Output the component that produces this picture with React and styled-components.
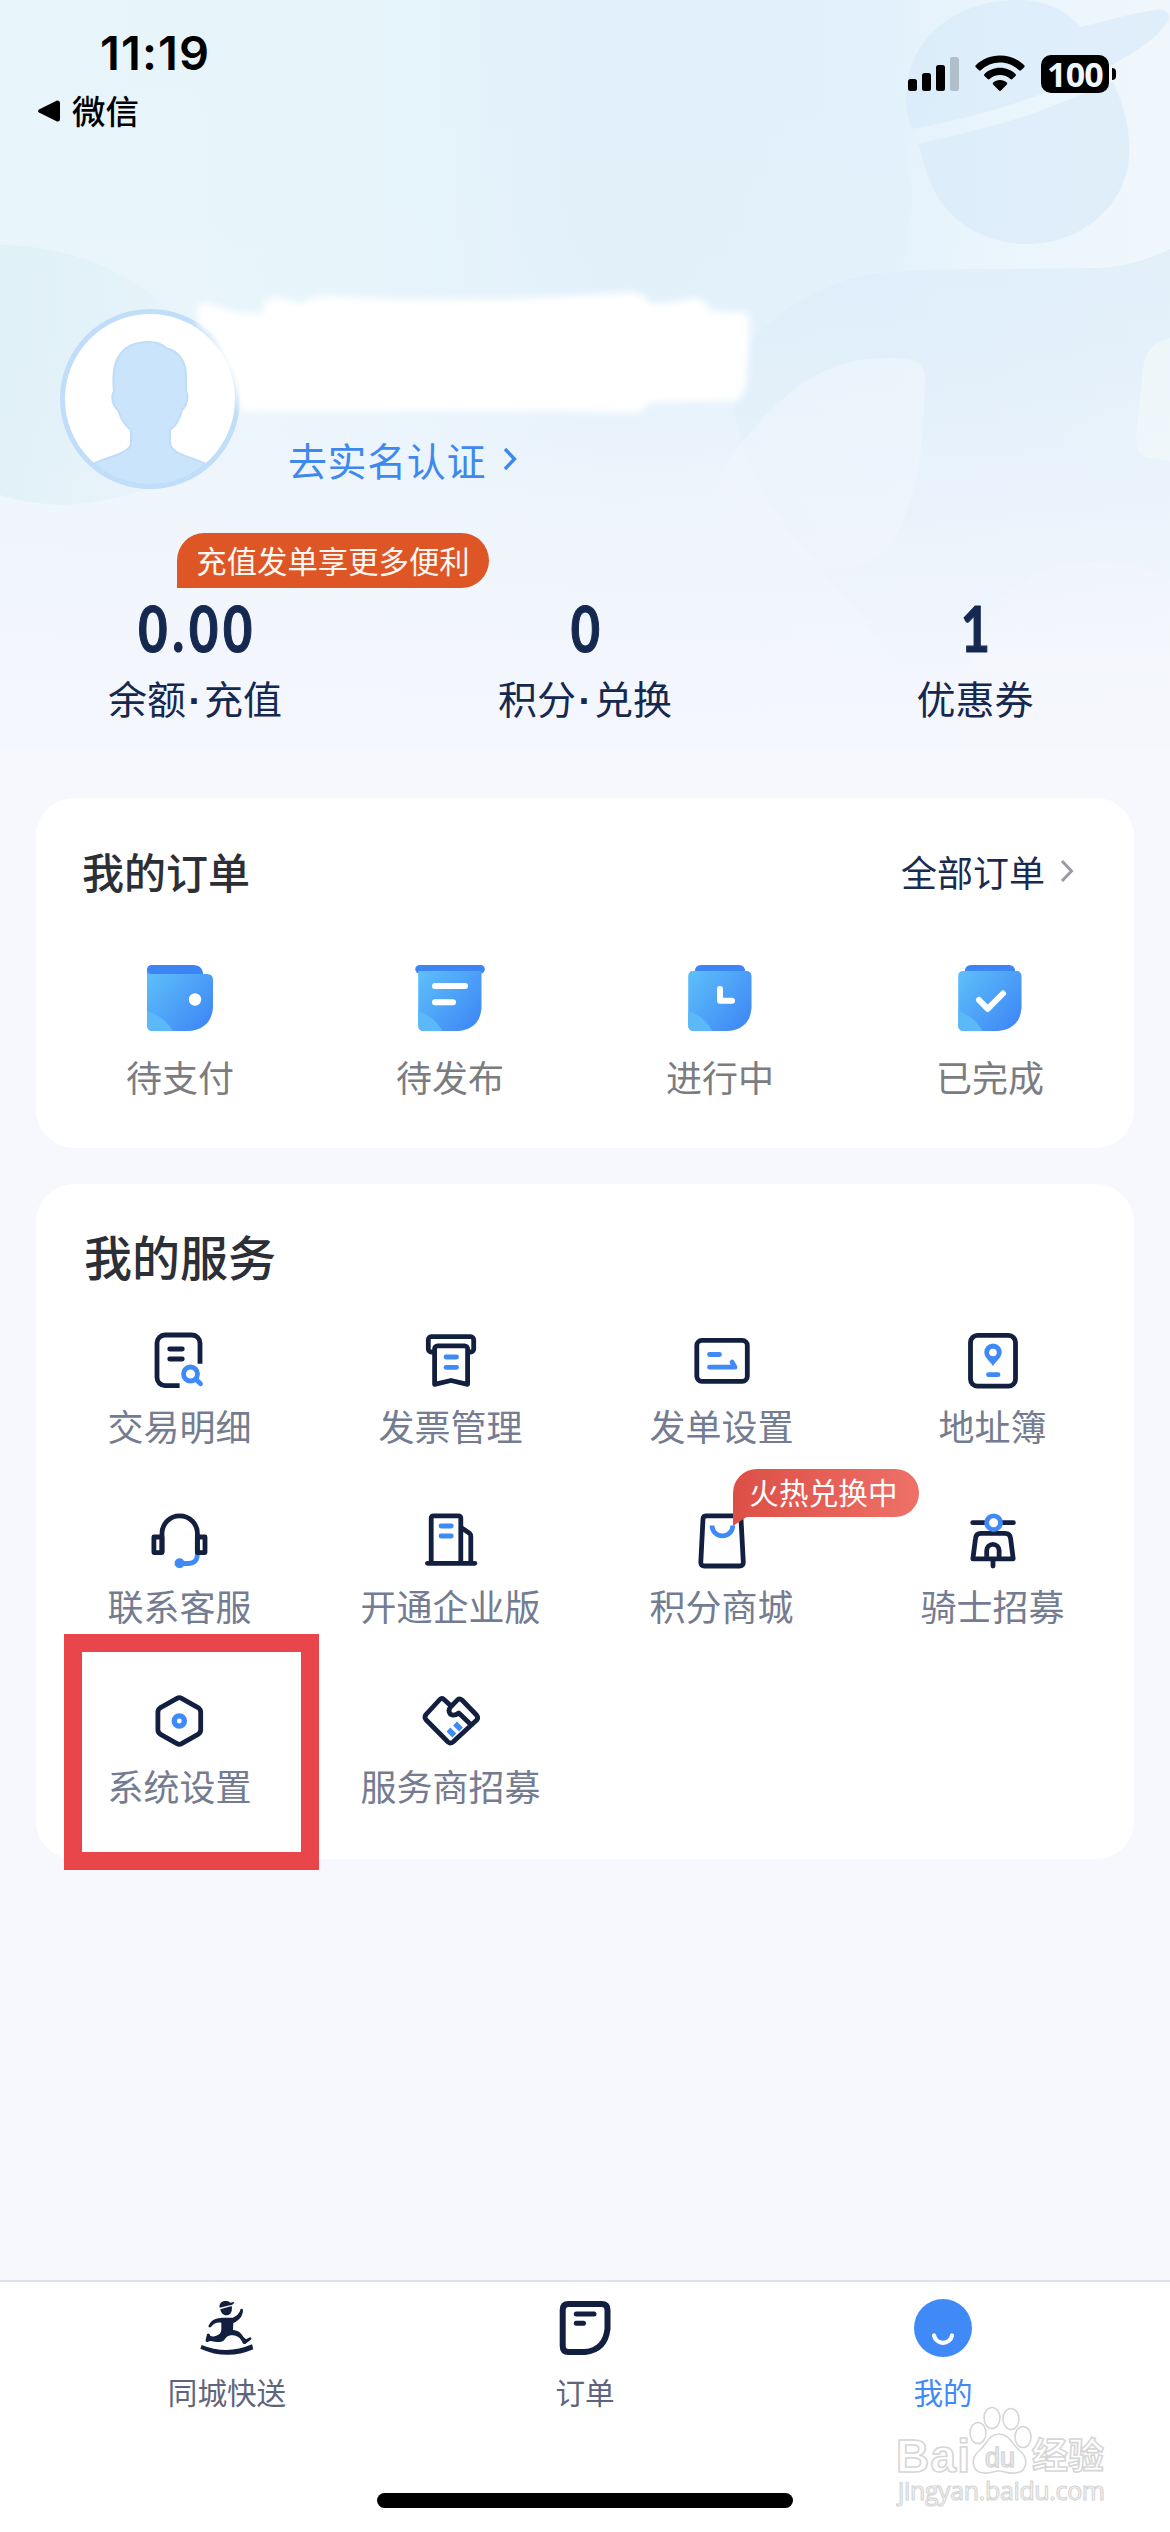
import React from 'react';
import styled, { createGlobalStyle, css } from 'styled-components';

const NAVY = '#121f3f';
const BLUE = '#3f8af6';

const GlobalStyle = createGlobalStyle`
  * {
    box-sizing: border-box;
  }
  body {
    margin: 0;
    background-color: #f7f8fd;
    font-family: 'Noto Sans CJK SC', 'Noto Sans', sans-serif;
  }
  svg {
    display: block;
    flex: none;
  }
`;

const Page = styled.div`
  display: flex;
  flex-direction: column;
  position: relative;
  width: 1170px;
  height: 2532px;
  overflow: hidden;
  background-color: #f7f8fd;
`;

const Header = styled.header`
  position: relative;
  height: 750px;
  margin-bottom: 48px;
  background: linear-gradient(
      180deg,
      rgba(246, 248, 253, 0) 0%,
      rgba(243, 246, 253, 0.1) 45%,
      rgba(243, 246, 253, 0.8) 72%,
      #f5f7fd 100%
    ),
    linear-gradient(90deg, #e8f5fa 0%, #e6f4fa 32%, #e1f0fa 52%, #e2f1fb 75%, #ebf5fb 100%);
`;

const Backdrop = styled.svg`
  position: absolute;
  top: 0;
  left: 0;
`;

const Smudge = styled.svg`
  position: absolute;
  top: 270px;
  left: 170px;
`;

const StatusBar = styled.div`
  position: relative;
  display: flex;
  justify-content: space-between;
  height: 309px;
  padding: 24px 54px 0 38px;
`;

const Clock = styled.div`
  height: 60px;
  padding-left: 62px;
  font-family: Inter, sans-serif;
  font-size: 47px;
  font-weight: 600;
  line-height: 57px;
  letter-spacing: 1.1px;
  color: #000;
`;

const BackLink = styled.div`
  display: flex;
  align-items: center;
  gap: 11px;
  height: 54px;
  font-size: 33.5px;
  font-weight: 500;
  line-height: 50px;
  color: #000;
`;

const BackLabel = styled.span`
  padding-bottom: 2px;
`;

const StatusIcons = styled.div`
  display: flex;
  align-items: flex-start;
  padding-top: 31px;
`;

const Battery = styled.div`
  display: flex;
  align-items: center;
  justify-content: center;
  width: 68px;
  height: 38px;
  margin-left: 16px;
  border-radius: 10px;
  background-color: #000;
  font-family: 'Open Sans', sans-serif;
  font-size: 34px;
  font-weight: 700;
  line-height: 38px;
  letter-spacing: -0.8px;
  color: #f0f7fc;
`;

const BatteryCap = styled.div`
  width: 4px;
  height: 12px;
  margin: 13px 0 0 3px;
  border-radius: 0 4px 4px 0;
  background-color: #000;
`;

const Profile = styled.div`
  position: relative;
  display: flex;
  align-items: flex-end;
  gap: 48px;
  height: 180px;
  padding-left: 60px;
`;

const VerifyLink = styled.a`
  display: flex;
  align-items: center;
  gap: 17px;
  height: 60px;
  padding-bottom: 1px;
  font-size: 39px;
  line-height: 56px;
  letter-spacing: 0.6px;
  color: #3f88ee;
`;

const Stats = styled.div`
  position: relative;
  display: grid;
  grid-template-columns: repeat(3, 1fr);
  padding-top: 105px;
`;

const Stat = styled.div`
  position: relative;
  display: flex;
  flex-direction: column;
  align-items: center;
  color: #15284f;
`;

const StatValue = styled.div`
  height: 68px;
  font-family: Lato, sans-serif;
  font-size: 63px;
  font-weight: 700;
  line-height: 68px;
  letter-spacing: 6px;
  text-indent: 6px;
  transform: scaleX(0.8);
  -webkit-text-stroke: 1.2px #15284f;
`;

const StatLabel = styled.div`
  height: 60px;
  margin-top: 5px;
  font-size: 39px;
  line-height: 60px;
`;

const Dot = styled.span`
  display: inline-block;
  width: 18px;
  text-align: center;
  font-family: 'Liberation Sans', sans-serif;
  font-weight: 700;
`;

const RechargeBadge = styled.div`
  position: absolute;
  top: -61px;
  left: 177px;
  width: 312px;
  height: 55px;
  border-radius: 28px 28px 28px 0;
  background-color: #de5626;
  font-size: 30.4px;
  line-height: 54px;
  text-align: center;
  white-space: nowrap;
  color: #fff8f2;
`;

const Card = styled.section`
  position: relative;
  margin: 0 36px 36px;
  height: ${({ $height }) => $height}px;
  border-radius: 38px;
  background-color: #fff;
`;

const CardHead = styled.div`
  display: flex;
  align-items: center;
  justify-content: space-between;
  height: ${({ $height }) => $height}px;
  padding: ${({ $padding }) => $padding};
`;

const CardTitle = styled.h2`
  margin: 0;
  font-size: ${({ $size }) => $size}px;
  font-weight: 500;
  line-height: 60px;
  color: #2d2f36;
`;

const AllOrders = styled.a`
  display: flex;
  align-items: center;
  gap: 15px;
  font-size: 36px;
  line-height: 52px;
  color: #1a2b50;
`;

const IconGrid = styled.div`
  display: grid;
  grid-template-columns: repeat(4, 1fr);
  grid-auto-rows: 180px;
  padding: ${({ $padding }) => $padding};
`;

const IconCell = styled.div`
  position: relative;
  display: flex;
  flex-direction: column;
  align-items: center;
  gap: ${({ $gap }) => $gap}px;
  font-size: 36px;
  line-height: 52px;
  white-space: nowrap;
  color: ${({ $color }) => $color};
`;

const HotBadge = styled.div`
  position: absolute;
  top: -41px;
  left: 147px;
  width: 186px;
  height: 48px;
  padding-right: 5px;
  border-radius: 24px 24px 24px 0;
  background: linear-gradient(90deg, #dc4f46, #ee7168);
  font-size: 29.5px;
  line-height: 45px;
  letter-spacing: 0.2px;
  text-align: center;
  color: #fff;

  &::after {
    content: '';
    position: absolute;
    top: 47px;
    left: 0;
    border-top: 10px solid #dc4f46;
    border-right: 15px solid transparent;
  }
`;

const Highlight = styled.div`
  position: absolute;
  top: 450px;
  left: 28px;
  width: 255px;
  height: 236px;
  border: 18px solid #e8464b;
`;

const TabBar = styled.nav`
  display: grid;
  grid-template-columns: repeat(3, 358px);
  justify-content: center;
  position: relative;
  height: 252px;
  margin-top: auto;
  padding-top: 17px;
  border-top: 2px solid #dde1ea;
  background-color: #fff;
`;

const Tab = styled.div`
  display: flex;
  flex-direction: column;
  align-items: center;
  gap: 13px;
  font-size: 29.6px;
  line-height: 44px;
  color: #5d657d;
  ${({ $active }) =>
    $active &&
    css`
      color: ${BLUE};
    `}
`;

const HomeIndicator = styled.div`
  position: absolute;
  bottom: 24px;
  left: 377px;
  width: 416px;
  height: 15px;
  border-radius: 8px;
  background-color: #000;
`;

const Watermark = styled.svg`
  position: absolute;
  top: 116px;
  left: 891px;
`;

/* ---------- header drawings ---------- */

const HeaderBackdrop = () => (
  <Backdrop width="1170" height="750" viewBox="0 0 1170 750">
    <defs>
      <linearGradient id="fade" x1="0" y1="0" x2="0" y2="1">
        <stop offset="0" stopColor="#dcecf9" stopOpacity="0.6" />
        <stop offset="0.6" stopColor="#e2effa" stopOpacity="0.4" />
        <stop offset="1" stopColor="#e6f0fb" stopOpacity="0" />
      </linearGradient>
      <linearGradient id="glow" x1="0" y1="0" x2="1" y2="0">
        <stop offset="0" stopColor="#f2f8fd" stopOpacity="0" />
        <stop offset="1" stopColor="#f0f7fd" stopOpacity="0.9" />
      </linearGradient>
      <linearGradient id="leaf" x1="0" y1="1" x2="1" y2="0">
        <stop offset="0" stopColor="#f5f7fd" stopOpacity="0" />
        <stop offset="0.4" stopColor="#f5f7fd" stopOpacity="0.4" />
        <stop offset="1" stopColor="#f1f6fd" stopOpacity="0.6" />
      </linearGradient>
      <linearGradient id="shade" x1="0" y1="0" x2="1" y2="0">
        <stop offset="0" stopColor="#dceff6" stopOpacity="0.7" />
        <stop offset="1" stopColor="#dceff6" stopOpacity="0" />
      </linearGradient>
    </defs>
    <path d="M0 245C90 245 180 290 240 400C230 450 170 500 60 505C30 503 15 500 0 495Z" fill="url(#shade)" />
    <path d="M880 0H1170V249C1145 262 1120 268 1094 268L900 273C930 180 890 90 880 0Z" fill="url(#glow)" />
    <path
      d="M740 352C765 325 785 308 815 293C845 278 870 273 895 272C930 269 965 269 1002 269L1094 268C1120 268 1148 260 1170 249V680H900C880 600 700 500 740 352Z"
      fill="url(#fade)"
    />
    <path
      d="M746 437C790 385 830 358 885 358C915 358 925 360 925 378C924 430 920 490 903 520C880 580 840 570 800 560C720 540 690 500 746 437Z"
      fill="url(#leaf)"
    />
    <path d="M1170 338C1152 343 1145 352 1143 370L1136 436C1135 450 1140 457 1150 458L1170 461Z" fill="#f3f9fb" opacity="0.65" />
    <path d="M960 700C975 610 1020 562 1095 562C1125 562 1150 568 1170 578V750H960Z" fill="#f8fafd" opacity="0.3" />
    <path
      d="M911.7 129C905 112 904 92 910 70C922 28 965 0 1018 0C1042 0 1064 8 1081 27C1110 20 1135 12 1161 9.500C1168 11 1171 16 1168 22C1155 40 1135 52 1113 64C1090 77 1070 83 1048 92C1000 109 960 120 911.700 129Z"
      fill="#d7e9f9"
      opacity="0.65"
    />
    <path
      d="M918.6 144C960 135 1000 124 1029 115C1060 104 1090 90 1113 82C1122 100 1129.500 126 1129.500 150C1129 205 1082 244 1028 244C985 244 950 222 934 190C927 176 923 160 918.600 144Z"
      fill="#d8e9f9"
      opacity="0.65"
    />
  </Backdrop>
);

const NameSmudge = () => (
  <Smudge width="620" height="170" viewBox="170 270 620 170">
    <filter id="soft" x="-5%" y="-15%" width="110%" height="130%">
      <feGaussianBlur stdDeviation="3.5" />
    </filter>
    <path
      d="M198 325L197 305Q206 300 215 305Q235 314 262 314L264 302Q272 295 284 299L302 303Q314 297 325 296Q460 305 632 292Q644 293 650 304Q672 303 697 298Q706 302 712 311L742 312Q750 314 750 322L747 378Q745 397 735 401L648 403L640 413L560 411H240Q236 390 232 380L212 338Z"
      fill="#fff"
      filter="url(#soft)"
    />
  </Smudge>
);

const Avatar = () => (
  <svg width="180" height="180" viewBox="0 0 180 180">
    <defs>
      <clipPath id="avatarClip">
        <circle cx="90" cy="90" r="87.5" />
      </clipPath>
    </defs>
    <circle cx="90" cy="90" r="87.500" fill="#fff" />
    <path
      clipPath="url(#avatarClip)"
      d="M89 33C96 33 102 35 106 39C119 42 126 53 126 66V82C129 86 127 97 122 101C120 109 116 117 110 121V134C111 147 138 148 150 158V180H28V158C42 148 70 146 71 134V121C65 117 61 110 58 101C52 96 51 87 54 82C51 55 58 33 89 33Z"
      fill="#c9e4fb"
      stroke="#c0dcf8"
      strokeWidth="2"
    />
    <circle cx="90" cy="90" r="87.500" fill="none" stroke="#c0ddfa" strokeWidth="5" />
  </svg>
);

const SignalIcon = () => (
  <svg width="52" height="36" viewBox="0 0 52 36">
    <rect x="0" y="24" width="9" height="12" rx="2.500" />
    <rect x="14" y="18" width="9" height="18" rx="2.500" />
    <rect x="28" y="10" width="9" height="26" rx="2.500" />
    <rect x="42" y="2" width="9" height="34" rx="2.500" fill="#b1bfca" />
  </svg>
);

const WifiSvg = styled.svg`
  margin-left: 15px;
`;

const WifiIcon = () => (
  <WifiSvg width="50" height="37" viewBox="0 0 50 37">
    <path d="M25 0.500C34.500 0.500 43 4.200 49.200 10.200C49.800 10.800 49.800 11.600 49.200 12.200L46 15.300C45.400 15.900 44.700 15.900 44.100 15.300C39 10.500 32.400 7.600 25 7.600S11 10.500 5.900 15.300C5.300 15.900 4.600 15.900 4 15.300L0.800 12.200C0.200 11.600 0.200 10.800 0.800 10.200C7 4.200 15.500 0.500 25 0.500Z" />
    <path d="M25 12.800C31 12.800 36.400 15.100 40.500 18.900C41.100 19.500 41.100 20.300 40.500 20.900L37.300 24C36.700 24.600 36 24.600 35.400 24C32.600 21.500 29 20 25 20S17.400 21.500 14.600 24C14 24.600 13.300 24.600 12.700 24L9.500 20.900C8.900 20.300 8.900 19.500 9.500 18.900C13.600 15.100 19 12.800 25 12.800Z" />
    <path d="M25 25C27.700 25 30.100 26 31.800 27.600C32.400 28.200 32.400 29 31.800 29.600L26 35.600C25.400 36.200 24.600 36.200 24 35.600L18.200 29.600C17.600 29 17.600 28.200 18.200 27.600C19.900 26 22.300 25 25 25Z" />
  </WifiSvg>
);

const Chevron = ({ color, width }) => (
  <svg width="14" height="24" viewBox="0 0 14 24" fill="none" stroke={color} strokeWidth={width}>
    <path d="M2 2L11.500 12L2 22" />
  </svg>
);

/* ---------- order icons ---------- */

const OrderSvg = ({ children }) => (
  <svg width="72" height="72" viewBox="0 0 72 72">
    <defs>
      <linearGradient id="sheet" x1="0" y1="0.1" x2="1" y2="0.9">
        <stop offset="0" stopColor="#5dbdf9" />
        <stop offset="1" stopColor="#3d86f6" />
      </linearGradient>
    </defs>
    {children}
  </svg>
);

const Sheet = () => (
  <>
    <path d="M9 9H62.500Q67.500 9 67.500 14.500V46Q66 67 44 69H10Q4.200 69 4.200 63V14.500Q4.200 9 9 9Z" fill="url(#sheet)" />
    <path d="M4.200 49Q20 54 28.500 69H10Q4.200 69 4.200 63Z" fill="#5bb9f8" />
  </>
);

const WalletIcon = () => (
  <OrderSvg>
    <path d="M8 3H49Q59 3 59.300 14H3V8Q3 3 8 3Z" fill="#3c85f3" />
    <path d="M3 10Q4 12 7 12H63Q69 12 69 18V46Q67 67 45 69H9Q3 69 3 63Z" fill="url(#sheet)" />
    <path d="M3 49Q20 54 29 69H9Q3 69 3 63Z" fill="#5bb9f8" />
    <circle cx="51" cy="37.500" r="6.200" fill="#fff" />
  </OrderSvg>
);

const DraftIcon = () => (
  <OrderSvg>
    <rect x="1.300" y="3" width="69.500" height="8.500" rx="4.200" fill="#3c85f3" />
    <path d="M4.200 9H67.500V46Q66 67 44 69H10Q4.200 69 4.200 63Z" fill="url(#sheet)" />
    <path d="M4.200 49Q20 54 28.500 69H10Q4.200 69 4.200 63Z" fill="#5bb9f8" />
    <path d="M21 24H51M21 40.300H39" stroke="#fff" strokeWidth="6" strokeLinecap="round" />
  </OrderSvg>
);

const ProgressIcon = () => (
  <OrderSvg>
    <path d="M10.700 10Q11 3 17 3H55Q61 3 61.300 10Z" fill="#3c85f3" />
    <Sheet />
    <path d="M36 27V38.700H48" fill="none" stroke="#fff" strokeWidth="6" strokeLinecap="round" strokeLinejoin="round" />
  </OrderSvg>
);

const DoneIcon = () => (
  <OrderSvg>
    <path d="M10.700 10Q11 3 17 3H55Q61 3 61.300 10Z" fill="#3c85f3" />
    <Sheet />
    <path d="M25 38L33.700 46.800L49 31.500" fill="none" stroke="#fff" strokeWidth="6" strokeLinecap="round" strokeLinejoin="round" />
  </OrderSvg>
);

/* ---------- service icons ---------- */

const ServiceSvg = ({ children }) => (
  <svg width="60" height="60" viewBox="0 0 60 60" fill="none" stroke={NAVY} strokeWidth="4.800" strokeLinejoin="round">
    {children}
  </svg>
);

const DetailIcon = () => (
  <ServiceSvg>
    <path d="M50 33.700V13a8 8 0 0 0-8-8H15a8 8 0 0 0-8 8v34.600a8 8 0 0 0 8 8h14.600" />
    <path d="M19.700 19H32.300M19.700 29H32.300" strokeLinecap="round" />
    <circle cx="40.500" cy="44" r="7" stroke={BLUE} />
    <path d="M46 49.500L50.500 53.800" stroke={BLUE} strokeLinecap="round" />
  </ServiceSvg>
);

const InvoiceIcon = () => (
  <ServiceSvg>
    <path d="M13 22H10.300a3 3 0 0 1-3-3V9.700a3 3 0 0 1 3-3h39.400a3 3 0 0 1 3 3V19a3 3 0 0 1-3 3H47" />
    <path d="M13.600 54.300V18.800a3 3 0 0 1 3-3h27a3 3 0 0 1 3 3V54.300L30 50.500Z" />
    <path d="M25 27H35.600M25 37.300H35.600" stroke={BLUE} strokeLinecap="round" />
  </ServiceSvg>
);

const OrderSettingIcon = () => (
  <ServiceSvg>
    <rect x="4.800" y="10.400" width="50.500" height="40.900" rx="5" />
    <path d="M17.500 24.500H27.500M17.500 37.200H43L40 32" stroke={BLUE} strokeLinecap="round" />
  </ServiceSvg>
);

const AddressIcon = () => (
  <ServiceSvg>
    <rect x="7.500" y="5.400" width="45" height="50.800" rx="7" />
    <path
      d="M30 13.500a8.700 8.700 0 0 1 8.700 8.800C38.700 28 33 31 30 36C27 31 21.300 28 21.300 22.300A8.700 8.700 0 0 1 30 13.500Z"
      fill={BLUE}
      stroke="none"
    />
    <circle cx="30" cy="22.500" r="3.800" fill="#fff" stroke="none" />
    <path d="M25.500 44.700H35" stroke={BLUE} strokeLinecap="round" />
  </ServiceSvg>
);

const SupportIcon = () => (
  <ServiceSvg>
    <path d="M47.300 43V45Q47 53.500 37.500 53.500H30" stroke={BLUE} />
    <circle cx="29.600" cy="53.300" r="5" fill={BLUE} stroke="none" />
    <path d="M12 42.600V23.500a17.700 17.700 0 0 1 35.400 0V42.600" />
    <path d="M12 27H3.900V42.600H12ZM47.300 27H55V42.600H47.300Z" />
  </ServiceSvg>
);

const CompanyIcon = () => (
  <ServiceSvg>
    <path d="M10.200 53V8a2.200 2.200 0 0 1 2.200-2.200h25.200a2.200 2.200 0 0 1 2.200 2.200V53" />
    <path d="M40 17.500L48.500 23.300Q49.800 24.500 49.800 26.500V53" />
    <path d="M6.500 53.300H53.800" strokeLinecap="round" />
    <path d="M20 16H30.300M20 26H30.300" stroke={BLUE} strokeLinecap="round" />
  </ServiceSvg>
);

const MallIcon = () => (
  <ServiceSvg>
    <path d="M14.500 5.800H45.500Q48.800 5.800 49 9L51.300 52Q51.400 56 47.500 56H12.500Q8.700 56 8.800 52L11 9Q11.200 5.800 14.500 5.800Z" />
    <path d="M20 15.500a10.400 10.400 0 0 0 20.800 0" stroke={BLUE} />
  </ServiceSvg>
);

const RiderIcon = () => (
  <ServiceSvg>
    <path d="M9.700 12.700H50.400" strokeLinecap="round" />
    <path d="M18 23.400H42Q47 23.400 47.600 28.500L50.200 48.900H9.900L12.500 28.500Q13 23.400 18 23.400Z" />
    <path d="M23.700 48.500V40.500a6.200 6.200 0 0 1 12.400 0V48.500" />
    <path d="M30 50V56" strokeLinecap="round" />
    <circle cx="30.600" cy="12.700" r="6.900" fill="#fff" stroke={BLUE} />
  </ServiceSvg>
);

const SettingIcon = () => (
  <ServiceSvg>
    <path d="M27 8.300Q29.300 7 31.600 8.300L47.600 17.300Q50.700 19.300 50.700 22V40Q50.700 42.700 47.600 44.700L31.600 53.700Q29.300 55 27 53.700L11 44.700Q7.900 42.700 7.900 40V22Q7.900 19.300 11 17.300Z" />
    <circle cx="29.300" cy="31" r="5.100" stroke={BLUE} strokeWidth="5.300" />
  </ServiceSvg>
);

const PartnerIcon = () => (
  <ServiceSvg>
    <path d="M27.500 39.500L33.300 45.500M34 33.500L40 39.500" stroke={BLUE} strokeWidth="5.400" />
    <path d="M29.500 15.500L22.800 9.300Q20.800 7.800 18.800 9.500L5 24.500Q3 27.300 5 29.800L27 52Q29.500 54 32 52L56 29.800Q57.500 27.500 55.500 25L41 10Q38.700 8 36.500 9.800L29.500 17Q26.500 21 29.500 24.300Q33 26.500 37.800 23L50.300 35" />
  </ServiceSvg>
);

/* ---------- tab icons ---------- */

const RunnerIcon = () => (
  <svg width="58" height="58" viewBox="24 27 174 174" fill={NAVY}>
    <path d="M89 53C86 39 98 31 110 33Q117 34 121 38L133 36C132 42 127 45 120 46Z" />
    <path d="M91 58L125 48C128 63 122 76 109 76C99 76 92 68 91 58Z" />
    <path d="M97 83H128C142 78 149 68 152 57Q156 54 159 59C159 76 150 90 130 99L129 120C144 121 153 128 161 142L168 148L180 142Q186 143 184 148L167 161Q160 164 158 159C153 146 144 137 128 136C111 136 108 143 103 150C93 160 77 155 60 153L53 156Q46 156 47 149L51 133Q54 128 59 133C60 139 66 141 74 139C86 135 94 131 94 118V98C80 96 72 100 66 108Q60 115 56 111Q54 108 59 101C67 88 80 84 97 83Z" />
    <path d="M35 165Q111 196 186 163L190 178Q111 212 31 176Z" />
  </svg>
);

const OrderTabIcon = () => (
  <svg width="58" height="58" viewBox="0 0 58 58" fill="none" stroke={NAVY} strokeWidth="6">
    <path d="M12.500 5H45.500Q51.500 5 51.500 11V30Q49 51 29 53H12.500Q6.700 53 6.700 47V11Q6.700 5 12.500 5Z" />
    <path d="M20.300 15H38M20.300 24.300H27.500" strokeWidth="5" strokeLinecap="round" />
  </svg>
);

const MineIcon = () => (
  <svg width="58" height="58" viewBox="0 0 58 58">
    <circle cx="29" cy="29" r="29" fill={BLUE} />
    <path d="M20 36.500a9.200 9.200 0 0 0 18 0" fill="none" stroke="#fff" strokeWidth="4.200" strokeLinecap="round" />
  </svg>
);

const BaiduMark = () => (
  <Watermark width="230" height="120" viewBox="0 0 230 120" fill="#fff" stroke="#d6d6d6" strokeWidth="1.600">
    <text x="5" y="74" fontFamily="Liberation Sans, sans-serif" fontWeight="700" fontSize="46" textLength="74">
      Bai
    </text>
    <ellipse cx="87" cy="35" rx="8" ry="10.500" />
    <ellipse cx="101" cy="20" rx="8" ry="10.500" />
    <ellipse cx="120" cy="21" rx="8" ry="10.500" />
    <ellipse cx="132" cy="39" rx="8" ry="10.500" />
    <path d="M108 36C118 36 121 46 128 52C138 60 137 74 124 75C117 76 113 73 108 73S99 76 93 75C80 74 79 60 89 52C96 46 98 36 108 36Z" />
    <text x="94" y="69" fontFamily="Liberation Sans, sans-serif" fontSize="27" textLength="30">
      du
    </text>
    <text x="141" y="71" fontFamily="Noto Sans CJK SC, sans-serif" fontWeight="700" fontSize="36" textLength="72">
      经验
    </text>
    <text x="7" y="102" fontFamily="Open Sans, sans-serif" fontSize="25" textLength="207" strokeWidth="1.200">
      jingyan.baidu.com
    </text>
  </Watermark>
);

const orders = [
  { label: '待支付', icon: <WalletIcon /> },
  { label: '待发布', icon: <DraftIcon /> },
  { label: '进行中', icon: <ProgressIcon /> },
  { label: '已完成', icon: <DoneIcon /> },
];

const services = [
  { label: '交易明细', icon: <DetailIcon /> },
  { label: '发票管理', icon: <InvoiceIcon /> },
  { label: '发单设置', icon: <OrderSettingIcon /> },
  { label: '地址簿', icon: <AddressIcon /> },
  { label: '联系客服', icon: <SupportIcon /> },
  { label: '开通企业版', icon: <CompanyIcon /> },
  { label: '积分商城', icon: <MallIcon />, badge: '火热兑换中' },
  { label: '骑士招募', icon: <RiderIcon /> },
  { label: '系统设置', icon: <SettingIcon /> },
  { label: '服务商招募', icon: <PartnerIcon /> },
];

const tabs = [
  { label: '同城快送', icon: <RunnerIcon /> },
  { label: '订单', icon: <OrderTabIcon /> },
  { label: '我的', icon: <MineIcon />, active: true },
];

const App = () => (
  <Page>
    <GlobalStyle />
    <Header>
      <HeaderBackdrop />
      <StatusBar>
        <div>
          <Clock>11:19</Clock>
          <BackLink>
            <svg width="23" height="22" viewBox="0 0 23 22">
              <path d="M1 9.500L19 0.500Q22 0 22 3V19Q22 22 19 21.500L1 12.500Q-1 11 1 9.500Z" />
            </svg>
            <BackLabel>微信</BackLabel>
          </BackLink>
        </div>
        <StatusIcons>
          <SignalIcon />
          <WifiIcon />
          <Battery>100</Battery>
          <BatteryCap />
        </StatusIcons>
      </StatusBar>
      <Profile>
        <Avatar />
        <VerifyLink>
          去实名认证
          <Chevron color="#3f88ee" width={3.4} />
        </VerifyLink>
      </Profile>
      <Stats>
        <Stat>
          <RechargeBadge>充值发单享更多便利</RechargeBadge>
          <StatValue>0.00</StatValue>
          <StatLabel>
            余额<Dot>·</Dot>充值
          </StatLabel>
        </Stat>
        <Stat>
          <StatValue>0</StatValue>
          <StatLabel>
            积分<Dot>·</Dot>兑换
          </StatLabel>
        </Stat>
        <Stat>
          <StatValue>1</StatValue>
          <StatLabel>优惠券</StatLabel>
        </Stat>
      </Stats>
      <NameSmudge />
    </Header>

    <Card $height={350}>
      <CardHead $height={164} $padding="0 60px 19px 46px">
        <CardTitle $size={42}>我的订单</CardTitle>
        <AllOrders>
          全部订单
          <Chevron color="#9a9ca2" width={3} />
        </AllOrders>
      </CardHead>
      <IconGrid $padding="0 9px">
        {orders.map(({ label, icon }) => (
          <IconCell key={label} $gap={16} $color="#7b7c80">
            {icon}
            {label}
          </IconCell>
        ))}
      </IconGrid>
    </Card>

    <Card $height={675}>
      <CardHead $height={146} $padding="0 48px 4px">
        <CardTitle $size={48}>我的服务</CardTitle>
      </CardHead>
      <IconGrid $padding="0 6px 0 8px">
        {services.map(({ label, icon, badge }) => (
          <IconCell key={label} $gap={9} $color="#747c91">
            {icon}
            {label}
            {badge && <HotBadge>{badge}</HotBadge>}
          </IconCell>
        ))}
      </IconGrid>
      <Highlight />
    </Card>

    <TabBar>
      {tabs.map(({ label, icon, active }) => (
        <Tab key={label} $active={active}>
          {icon}
          {label}
        </Tab>
      ))}
      <BaiduMark />
      <HomeIndicator />
    </TabBar>
  </Page>
);

export default App;
